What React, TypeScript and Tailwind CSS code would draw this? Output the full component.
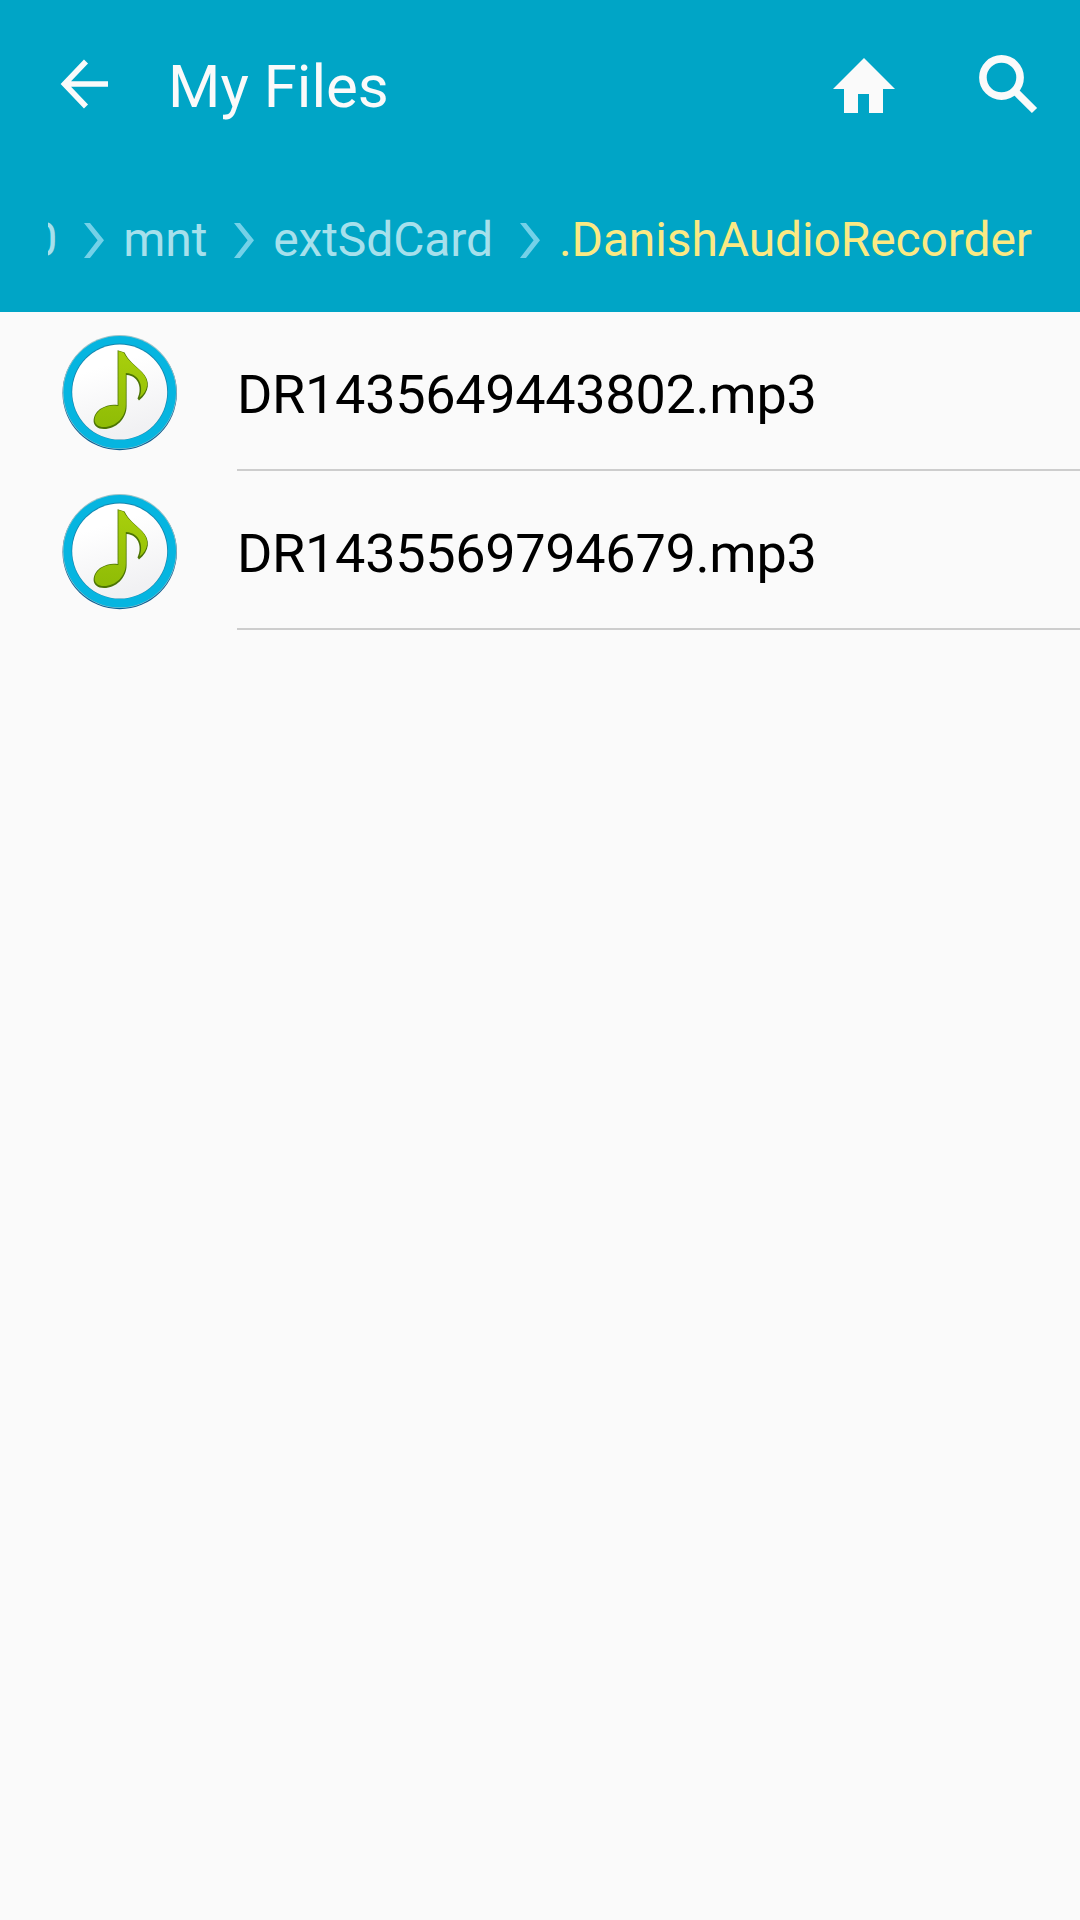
const PARENT_FOLDERS = ["0", "mnt", "extSdCard"];
const CURRENT_FOLDER = ".DanishAudioRecorder";

const FILES = ["DR1435649443802.mp3", "DR1435569794679.mp3"];

export default function App() {
  return (
    <div className="flex h-[1920px] w-[1080px] flex-col overflow-hidden bg-[#fafafa] font-['Roboto',sans-serif]">
      <header className="flex h-[312px] flex-col bg-[#00a5c6]">
        <Toolbar />
        <Breadcrumbs />
      </header>
      <ul>
        {FILES.map((name) => (
          <FileRow key={name} name={name} />
        ))}
      </ul>
    </div>
  );
}

function Toolbar() {
  return (
    <div className="flex h-[168px] items-center pr-[42px] pl-[60px] text-[#fafafa]">
      <button aria-label="Back">
        <BackIcon />
      </button>
      <h1 className="ml-[59px] flex-1 pt-1.5 text-[60px] leading-[70px]">
        My Files
      </h1>
      <button aria-label="Home" className="mt-1 mr-[84px]">
        <HomeIcon />
      </button>
      <button aria-label="Search">
        <SearchIcon />
      </button>
    </div>
  );
}

/* The trail is pinned to its end, so the oldest folders slide out on the left. */
function Breadcrumbs() {
  return (
    <nav className="mx-12 flex h-[144px] items-center justify-end overflow-hidden text-[48px] leading-[56px] tracking-[-0.12px] whitespace-nowrap">
      {PARENT_FOLDERS.map((folder) => (
        <span key={folder} className="flex shrink-0 items-center">
          <span className="text-[#a6e0ec]">{folder}</span>
          <ChevronIcon />
        </span>
      ))}
      <span className="shrink-0 text-[#fbe983]">{CURRENT_FOLDER}</span>
    </nav>
  );
}

function FileRow({ name }: { name: string }) {
  return (
    <li className="flex h-[159px] items-center pl-[60px]">
      <MusicIcon />
      <div className="ml-[57px] flex h-full flex-1 items-center border-b-2 border-[#cdcdcd] pt-2 text-[54px] leading-[64px] tracking-[-0.32px] text-black">
        {name}
      </div>
    </li>
  );
}

function BackIcon() {
  return (
    <svg width="49" height="50" viewBox="0 0 49 50" fill="none">
      <path
        d="M26 2.5 4.5 25 26 47.5M4.5 25H48"
        stroke="currentColor"
        strokeWidth="5.6"
      />
    </svg>
  );
}

function HomeIcon() {
  return (
    <svg width="62" height="56" viewBox="0 0 62 56" fill="currentColor">
      <path d="M31 0 62 31H50V55H36V36H25V55H11V31H0Z" />
    </svg>
  );
}

function SearchIcon() {
  return (
    <svg width="59" height="59" viewBox="0 0 59 59" fill="none">
      <circle cx="22.5" cy="22.5" r="18.6" stroke="currentColor" strokeWidth="7.6" />
      <path d="M35.5 35.5 55.5 55.5" stroke="currentColor" strokeWidth="7.4" />
    </svg>
  );
}

function ChevronIcon() {
  return (
    <svg
      className="mr-[19px] ml-[27px] text-[#74d1e8]"
      width="20"
      height="35"
      viewBox="0 0 20 35"
      fill="currentColor"
    >
      <path d="M0 0H6L20 17.2 6 35H0L13.6 17.2Z" />
    </svg>
  );
}

function MusicIcon() {
  return (
    <svg className="mt-0.5 h-[120px] w-[120px]" viewBox="0 0 120 120">
      <defs>
        <linearGradient id="disc" x1="0" y1="0" x2="0.3" y2="1">
          <stop offset="0.3" stopColor="#ffffff" />
          <stop offset="1" stopColor="#f1f1f3" />
        </linearGradient>
        <linearGradient id="note" x1="0" y1="0" x2="0" y2="1">
          <stop offset="0" stopColor="#a8cf0c" />
          <stop offset="1" stopColor="#8fbc06" />
        </linearGradient>
      </defs>
      <circle cx="59.7" cy="60" r="57.2" fill="#0c5f94" />
      <circle cx="59.7" cy="59" r="57" fill="#9fc4c8" />
      <circle cx="59.7" cy="59.2" r="56.3" fill="#06b5e0" />
      <circle cx="59.7" cy="58.8" r="48.2" fill="#1585ad" />
      <circle cx="59.7" cy="59.1" r="47.5" fill="url(#disc)" />
      <path
        d="M57.6 17.3 64.6 19.4C68 27 76 33 82 39C91 48 89.5 59 79 67.5L77.5 65.5C82 57 80 43 66.6 42V73C66.6 86 56 96 44 96C31 96 31 83 40 76C46 72 53 71 57.6 72Z"
        fill="#4c7404"
      />
      <path
        d="M58.4 18.1 63.8 19.8C67.4 27.4 76 33.4 81.5 39C90 47.5 88.5 58 79.5 64.5C83.5 55 81 41 65.8 39.9V71.5C65.8 84.5 55.5 94 44 94C32.5 94 32 83 40.6 76.4C46 72.6 54 71.8 58.4 73Z"
        fill="url(#note)"
      />
    </svg>
  );
}
